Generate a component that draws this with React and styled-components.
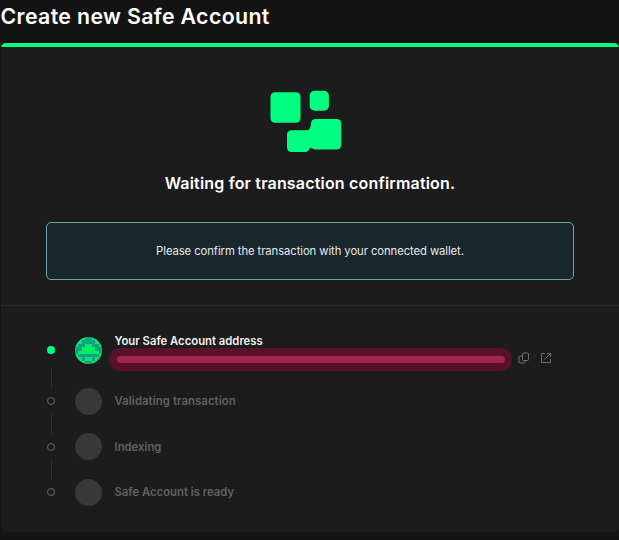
import React from "react";
import styled, { createGlobalStyle } from "styled-components";

const GlobalStyle = createGlobalStyle`
  * { box-sizing: border-box; }
  body {
    margin: 0;
    background: #121212;
    color: #fff;
    font-family: Inter, "Open Sans", sans-serif;
    overflow: hidden;
  }
`;

const Page = styled.main`
  height: 540px;
  display: flex;
  flex-direction: column;
  background: #121312;
`;

const Title = styled.h1`
  margin: 0;
  height: 43px;
  padding: 2px 0 0 0.5px;
  font-size: 21.3px;
  line-height: 28px;
  font-weight: 600;
  letter-spacing: ${(p) => p.$spacing};
  white-space: nowrap;
`;

const Card = styled.section`
  height: 489px;
  margin-left: 1px;
  border-radius: 5px;
  overflow: hidden;
  background: #1c1c1c;
`;

const Progress = styled.div`
  height: 4px;
  background: #00ff80;
`;

const Status = styled.div`
  height: 259px;
  padding: 41px 45px 0;
  display: flex;
  flex-direction: column;
  align-items: center;
  border-bottom: 1px solid #292a2a;
`;

const Logo = styled.svg`
  display: block;
  width: 76px;
  height: 68px;
  margin-right: 9px;
`;

const Heading = styled.h2`
  margin: 16px 0 0;
  font-size: 16px;
  line-height: 22px;
  font-weight: 600;
  letter-spacing: ${(p) => p.$spacing};
  white-space: nowrap;
`;

const Notice = styled.div`
  width: 528px;
  height: 58px;
  margin-top: 28px;
  display: flex;
  align-items: center;
  justify-content: center;
  border: 1px solid #6da5ad;
  border-radius: 5px;
  background: #19262c;
  color: #e6e9ea;
  font-size: 11.3px;
  letter-spacing: ${(p) => p.$spacing};
  white-space: nowrap;
`;

const Steps = styled.div`
  padding: 26px 0 0 45px;
`;

const Step = styled.div`
  height: ${(p) => (p.$active ? 36 : 26)}px;
  display: flex;
  align-items: center;
`;

const Dot = styled.span`
  width: ${(p) => (p.$active ? 8.5 : 8)}px;
  height: ${(p) => (p.$active ? 8.5 : 8)}px;
  margin: 0 ${(p) => (p.$active ? 19.5 : 20)}px 0 ${(p) => (p.$active ? 0.5 : 1)}px;
  border-radius: 50%;
  border: ${(p) => (p.$active ? "none" : "1px solid #65676a")};
  background: ${(p) => (p.$active ? "#00ff80" : "transparent")};
  flex: none;
`;

const Avatar = styled.span`
  width: 27px;
  height: 27px;
  margin-left: ${(p) => (p.$active ? 0.5 : 0)}px;
  flex: none;
  border-radius: 50%;
  overflow: hidden;
  background: #393939;
`;

const Blocks = styled.svg`
  display: block;
  width: 27px;
  height: 27px;
`;

const Label = styled.span`
  display: block;
  margin-left: ${(p) => (p.$active ? 5.5 : 12.5)}px;
  font-size: 11.3px;
  line-height: 16px;
  font-weight: 600;
  letter-spacing: ${(p) => p.$spacing};
  color: ${(p) => (p.$active ? "#f1f1f1" : "#606164")};
  white-space: nowrap;
`;

const Connector = styled.div`
  width: 1px;
  height: ${(p) => p.$height}px;
  margin-left: 5px;
  background: #303132;
`;

const Details = styled.div`
  height: 36px;
  margin-left: 7px;
  padding-top: 1px;
`;

const AddressRow = styled.div`
  display: flex;
  align-items: center;
  margin-top: -1px;
`;

const Redaction = styled.div`
  width: 403px;
  height: 23px;
  padding: 8px 7px 8px 8px;
  border-radius: 12px;
  background: #591127;
`;

const RedactionBar = styled.div`
  height: 7px;
  border-radius: 4px;
  background: #a42550;
`;

const ActionIcon = styled.svg`
  width: 12px;
  height: 12px;
  margin: -3px 0 0 ${(p) => p.$gap}px;
  fill: none;
  stroke: #6d6f72;
  stroke-width: 1;
`;

const pattern = [
  "GGGTTGGG",
  "GGTTTTGG",
  "GTTGGTTG",
  "TTGGGGTT",
  "TGGGGGGT",
  "GTTTTTTG",
  "TGTGGTGT",
  "GGGTTGGG",
];

function Identicon() {
  return (
    <Blocks viewBox="0 0 8 8" shapeRendering="crispEdges">
      <rect width="8" height="8" fill="#05ed65" />
      {pattern.flatMap((row, y) =>
        [...row].map((c, x) =>
          c === "T" ? <rect key={`${x}-${y}`} x={x} y={y} width="1" height="1" fill="#12a184" /> : null
        )
      )}
    </Blocks>
  );
}

const pending = [
  { name: "Validating transaction", spacing: "0.1px" },
  { name: "Indexing", spacing: "0px" },
  { name: "Safe Account is ready", spacing: "0px" },
];

export default function App() {
  return (
    <>
      <GlobalStyle />
      <Page>
        <Title $spacing="0.36px">Create new Safe Account</Title>
        <Card>
          <Progress />
          <Status>
            <Logo viewBox="0 0 76 68" fill="#00ff80">
              <rect x="2.5" y="4.2" width="30" height="30.5" rx="4.5" />
              <rect x="41.7" y="2.7" width="19.2" height="20" rx="5" />
              <rect x="43" y="31" width="30.2" height="30.5" rx="4.5" />
              <rect x="19" y="42.3" width="22.5" height="21.7" rx="4.5" />
              <path d="M37 42.3Q43 43 43 35L48 45V61.5Q43 58 40 62Z" />
            </Logo>
            <Heading $spacing="0.18px">Waiting for transaction confirmation.</Heading>
            <Notice $spacing="-0.09px">Please confirm the transaction with your connected wallet.</Notice>
          </Status>
          <Steps>
            <Step $active>
              <Dot $active />
              <Avatar $active><Identicon /></Avatar>
              <Details>
                <Label $active $spacing="0px">Your Safe Account address</Label>
                <AddressRow>
                  <Redaction><RedactionBar /></Redaction>
                  <ActionIcon $gap={6} viewBox="0 0 12 12">
                    <rect x="4.5" y="1" width="6" height="7.5" rx="1" />
                    <path d="M4.5 4H2Q1 4 1 5V10Q1 11 2 11H6Q7 11 7 10V8.5" />
                  </ActionIcon>
                  <ActionIcon $gap={10} viewBox="0 0 12 12">
                    <path d="M5 1.5H1.5V10.5H10.5V7M7 1.5H10.5V5M10.5 1.5L4.5 7.5" />
                  </ActionIcon>
                </AddressRow>
              </Details>
            </Step>
            {pending.map(({ name, spacing }, i) => (
              <React.Fragment key={name}>
                <Connector $height={i === 0 ? 20 : 19.5} />
                <Step>
                  <Dot />
                  <Avatar />
                  <Label $spacing={spacing}>{name}</Label>
                </Step>
              </React.Fragment>
            ))}
          </Steps>
        </Card>
      </Page>
    </>
  );
}
